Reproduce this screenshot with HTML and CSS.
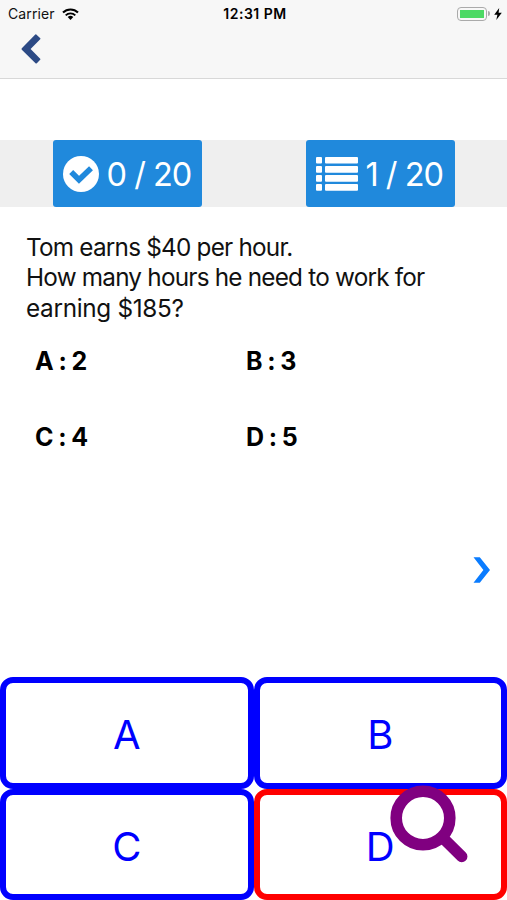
FILE: index.html
```
<!DOCTYPE html>
<html lang="en">
<head>
    <meta charset="UTF-8">
    <meta name="viewport" content="width=device-width, initial-scale=1.0">
    <title>Quiz</title>
    <link rel="stylesheet" href="styles.css">
</head>
<body>

    <header class="header">
        <div class="status-bar">
            <div class="carrier">
                <span>Carrier</span>
                <svg class="wifi" viewBox="0 0 17 12" width="17" height="12">
                    <path d="M1 4.6 A10.6 10.6 0 0 1 16 4.6" fill="none" stroke="#000" stroke-width="2.1"/>
                    <path d="M3.7 7.4 A6.8 6.8 0 0 1 13.3 7.4" fill="none" stroke="#000" stroke-width="1.9"/>
                    <path d="M5.7 9.1 A4 4 0 0 1 11.3 9.1 L8.5 12 Z"/>
                </svg>
            </div>
            <div class="clock">12:31 PM</div>
            <div class="power">
                <div class="battery"><div class="battery-level"></div></div>
                <div class="battery-tip"></div>
                <svg class="bolt" viewBox="0 0 8 12" width="8" height="12">
                    <path d="M5.2 0 L0.2 6.8 H3.4 L2.3 12 L7.8 4.8 H4.6 Z"/>
                </svg>
            </div>
        </div>
        <a class="back" href="#" aria-label="Back">
            <svg viewBox="0 0 20 30" width="20" height="30">
                <path d="M15.3 0.4 L19.3 4.2 Q19.7 4.8 19.2 5.3 L9.6 15 L19.2 24.7 Q19.7 25.2 19.2 25.7 L15.8 29.2 Q15.2 29.8 14.5 29.2 L0.8 15.7 Q0.2 15 0.8 14.3 L14.3 0.6 Q14.8 0 15.3 0.4 Z" fill="#2c4a85"/>
            </svg>
        </a>
    </header>

    <div class="stats">
        <div class="stat">
            <svg viewBox="0 0 36 36" width="36" height="36">
                <circle cx="18" cy="18" r="18" fill="#fff"/>
                <path d="M8.2 16 L16 23.8 L28 12.2" fill="none" stroke="#2089dc" stroke-width="5.6" stroke-linejoin="miter"/>
            </svg>
            <span class="stat-text">0 / 20</span>
        </div>
        <div class="stat">
            <svg viewBox="0 0 42 34" width="42" height="34" fill="#fff">
                <rect x="0" y="0" width="6" height="6.6" rx="1"/>
                <rect x="9" y="0" width="33" height="6.6" rx="1"/>
                <rect x="0" y="9.1" width="6" height="6.6" rx="1"/>
                <rect x="9" y="9.1" width="33" height="6.6" rx="1"/>
                <rect x="0" y="18.1" width="6" height="6.6" rx="1"/>
                <rect x="9" y="18.1" width="33" height="6.6" rx="1"/>
                <rect x="0" y="27.1" width="6" height="6.6" rx="1"/>
                <rect x="9" y="27.1" width="33" height="6.6" rx="1"/>
            </svg>
            <span class="stat-text">1 / 20</span>
        </div>
    </div>

    <main class="question">
        <p class="question-text">Tom earns $40 per hour.<br>How many hours he need to work for<br><span class="last-line">earning $185?</span></p>
        <div class="options">
            <div>A : 2</div>
            <div>B : 3</div>
            <div>C : 4</div>
            <div>D : 5</div>
        </div>
        <a class="next" href="#" aria-label="Next">
            <svg viewBox="0 0 18 26" width="18" height="26">
                <path d="M0.5 0.3 H6.8 L17 13 L6.8 25.7 H0.5 L10.4 13 Z" fill="#0a7cff"/>
            </svg>
        </a>
    </main>

    <div class="answers">
        <button class="answer">A</button>
        <button class="answer">B</button>
        <button class="answer">C</button>
        <button class="answer wrong">D</button>
        <svg class="search" viewBox="0 0 78 78" width="78" height="78">
            <path d="M54 54 L71.7 71.5" stroke="purple" stroke-width="11.5" stroke-linecap="round"/>
            <circle cx="33" cy="33" r="26.8" fill="none" stroke="purple" stroke-width="11.6"/>
        </svg>
    </div>

</body>
</html>
```
FILE: styles.css
```
* {
    box-sizing: border-box;
}
body {
    margin: 0;
    height: 900px;
    display: flex;
    flex-direction: column;
    font-family: Inter, "Liberation Sans", sans-serif;
    background-color: #fff;
    color: #111;
    overflow: hidden;
}
.header {
    height: 79px;
    background-color: #f7f7f7;
    border-bottom: 1px solid #d8d8d8;
}
.status-bar {
    display: grid;
    grid-template-columns: 1fr auto 1fr;
    align-items: center;
    height: 27px;
    padding: 0 5px 0 8px;
    font-size: 14px;
}
.carrier {
    display: flex;
    align-items: center;
    gap: 7px;
    letter-spacing: 0.1px;
}
.clock {
    font-weight: 600;
    letter-spacing: 0.5px;
    color: #000;
}
.power {
    display: flex;
    align-items: center;
    justify-content: flex-end;
}
.battery {
    width: 30px;
    height: 14px;
    padding: 2px;
    border: 1px solid #aaa;
    border-radius: 4px;
}
.battery-level {
    height: 8px;
    background-color: #4cd964;
}
.battery-tip {
    width: 2px;
    height: 5px;
    margin: 0 4px 0 1px;
    background-color: #aaa;
    border-radius: 0 2px 2px 0;
}
.back {
    display: block;
    width: 20px;
    height: 30px;
    margin: 7px 0 0 21px;
}
.back svg,
.next svg {
    display: block;
}
.stats {
    display: flex;
    justify-content: space-between;
    height: 67px;
    margin-top: 61px;
    padding: 0 52px 0 53px;
    background-color: #efefef;
}
.stat {
    display: flex;
    align-items: center;
    gap: 8px;
    width: 149px;
    padding-left: 9.5px;
    background-color: #2089dc;
    border-radius: 3px;
}
.stat-text {
    padding-top: 2px;
    color: #fff;
    font-size: 32.5px;
    font-weight: 400;
    letter-spacing: -1px;
    white-space: nowrap;
}
.question {
    flex: 1;
    padding: 25px 26px 0;
}
.question-text {
    margin: 0;
    font-size: 24.3px;
    line-height: 30.3px;
    letter-spacing: -0.78px;
    white-space: nowrap;
}
.last-line {
    letter-spacing: -0.3px;
}
.options {
    display: grid;
    grid-template-columns: 211px 1fr;
    grid-auto-rows: 76px;
    padding: 22px 0 0 9px;
    font-size: 25px;
    line-height: 32px;
    font-weight: 700;
    letter-spacing: -0.6px;
    color: #000;
}
.next {
    display: block;
    width: 18px;
    margin: 60px -10px 0 auto;
}
.answers {
    position: relative;
    display: grid;
    grid-template-columns: 1fr 1fr;
    grid-template-rows: 111.5px 111.5px;
    height: 223px;
}
.answer {
    padding: 4px 0 0;
    border: 6px solid #0000ff;
    border-radius: 13px;
    background-color: #fff;
    color: #0000ff;
    font-family: inherit;
    font-size: 40px;
    font-weight: 400;
}
.wrong {
    border-color: #ff0000;
}
.search {
    position: absolute;
    left: 390px;
    top: 108px;
}
```
